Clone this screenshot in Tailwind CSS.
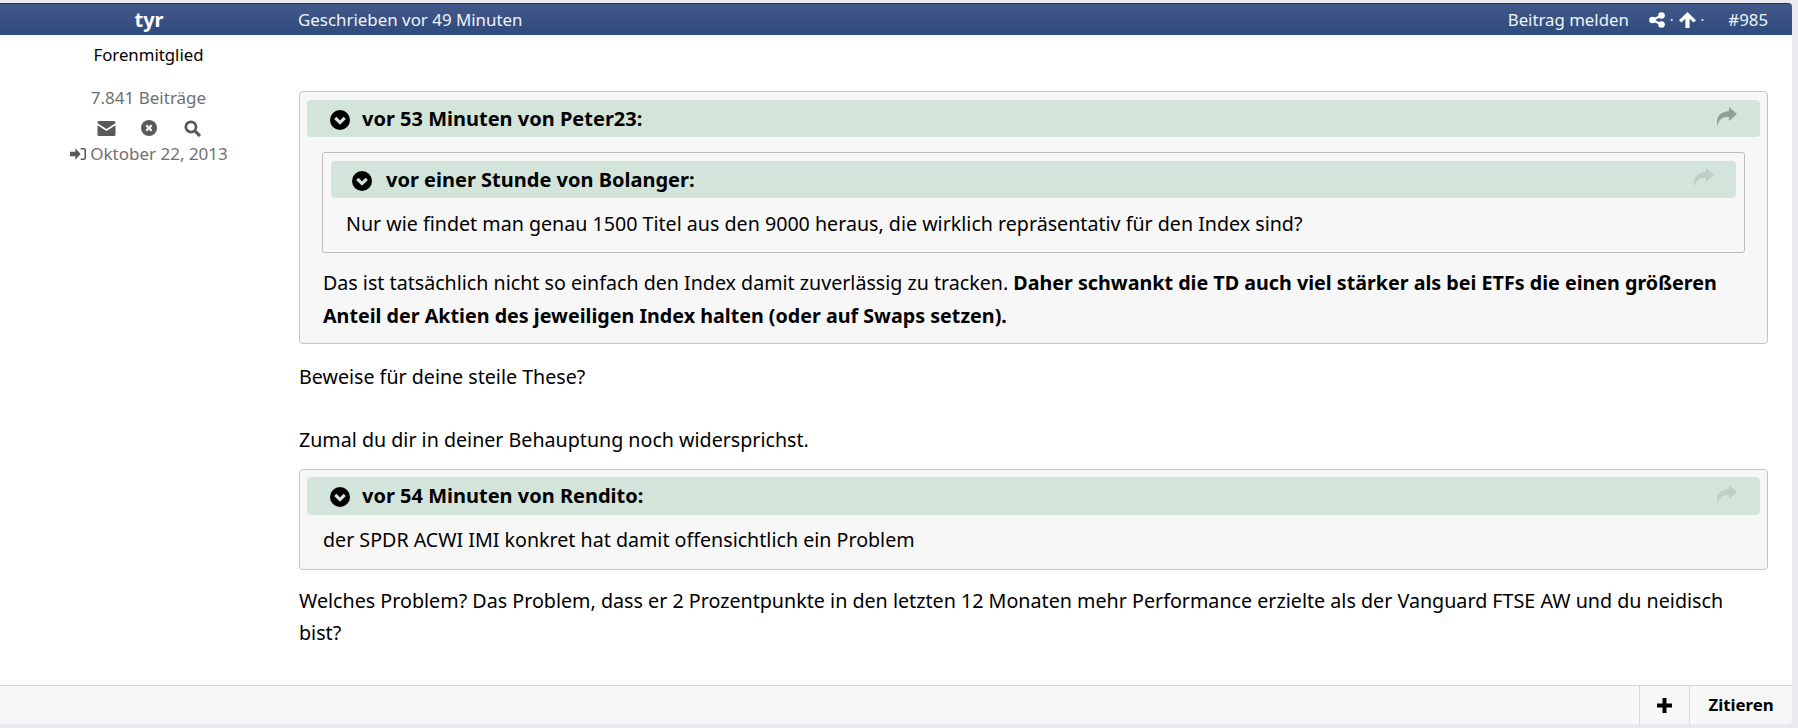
<!DOCTYPE html>
<html><head><meta charset="utf-8"><script src="https://cdn.jsdelivr.net/npm/@tailwindcss/browser@4"></script></head>
<body class="bg-[#e9e9ef] m-0 h-[728px] overflow-hidden font-['Noto_Sans','Open_Sans',sans-serif] text-black">
<div class="w-[1792px] pt-[3px]">
 <div class="h-[32px] rounded-tr-[4px] bg-gradient-to-b from-[#42598a] to-[#2f4a7c] border-t border-[#22365f] flex items-center text-white">
  <div class="w-[298px] text-center text-[20px] font-bold">tyr</div>
  <div class="text-[16.9px] text-[#eef2f8]">Geschrieben vor 49 Minuten</div>
  <div class="ml-auto flex items-center text-[16.8px] text-[#eef2f8] pr-[24px]">
   <span>Beitrag melden</span>
   <svg class="ml-[20px] w-[16px] h-[16px]" viewBox="0 0 16 16" fill="white"><circle cx="3.5" cy="8" r="3.3"/><circle cx="12.5" cy="3.5" r="3.3"/><circle cx="12.5" cy="12.5" r="3.3"/><path d="M3.5 8 12.5 3.5M3.5 8l9 4.500" stroke="white" stroke-width="2"/></svg>
   <span class="ml-[5px] text-[14px]">·</span>
   <svg class="ml-[5px] w-[17px] h-[16px]" viewBox="0 0 17 16" fill="white"><path d="M8.5 0 17 8.300l-2.400 2.300-4-3.900V16H6.400V6.700l-4 3.900L0 8.300z"/></svg>
   <span class="ml-[5px] text-[14px]">·</span>
   <span class="ml-[24px]">#985</span>
  </div>
 </div>
 <div class="flex bg-white h-[650px]">
  <div class="w-[297px] shrink-0 flex flex-col items-center">
   <div class="mt-[8px] text-[16.8px] leading-[24px]">Forenmitglied</div>
   <div class="mt-[19px] text-[17px] leading-[24px] text-[#6f6f6f]">7.841 Beiträge</div>
   <div class="mt-[7px] flex items-center h-[22px]">
    <svg class="w-[19px] h-[15px]" viewBox="0 0 18 15" fill="#5a5a5a"><path d="M1.500 0h15A1.500 1.500 0 0 1 18 1.500v.8L9 8 0 2.300v-.8A1.500 1.500 0 0 1 1.500 0z"/><path d="M0 4.300 9 10l9-5.700v9.200a1.500 1.500 0 0 1-1.500 1.500h-15A1.500 1.500 0 0 1 0 13.500z"/></svg>
    <svg class="ml-[25px] w-[16px] h-[16px]" viewBox="0 0 15 15"><circle cx="7.500" cy="7.500" r="7.500" fill="#5a5a5a"/><path d="M5 5l5 5M10 5l-5 5" stroke="white" stroke-width="2"/></svg>
    <svg class="ml-[27px] w-[17px] h-[17px]" viewBox="0 0 16 16" fill="none" stroke="#5a5a5a"><circle cx="6.500" cy="6.500" r="4.800" stroke-width="2.600"/><path d="M10.200 10.200 15 15" stroke-width="3"/></svg>
   </div>
   <div class="mt-[3px] ml-[1px] flex items-center text-[17px] leading-[24px] text-[#6f6f6f]">
    <svg class="mr-[4px] w-[16px] h-[14px]" viewBox="0 0 15 13" fill="#5a5a5a"><path d="M0 4.500h5V1l5 5.500L5 12V8.500H0z"/><path d="M10 .8h3a2 2 0 0 1 2 2v7.400a2 2 0 0 1-2 2h-3v-1.500h3a.5.5 0 0 0 .5-.5V2.800a.5.5 0 0 0-.5-.5h-3z"/></svg>
    <span>Oktober 22, 2013</span>
   </div>
  </div>
  <div class="ml-[2px] w-[1469px] text-[19.65px] leading-[33px]">
   <div class="mt-[56px] h-[253px] rounded-[4px] border border-[#c4c4c4] bg-[#f7f7f7] px-[7px] pt-[8px]">
    <div class="h-[37px] rounded-[4px] bg-[#d3e5db] flex items-center font-bold text-[20px] pl-[23px] pr-[23px]">
     <svg class="w-[20px] h-[20px] mr-[12px] mt-[2px]" viewBox="0 0 19 19"><circle cx="9.500" cy="9.500" r="9.500" fill="black"/><path d="M5 7.500l4.500 4.500L14 7.500" fill="none" stroke="#d3e5db" stroke-width="3"/></svg>
     <span>vor 53 Minuten von Peter23:</span>
     <svg class="ml-auto w-[21px] h-[19px] -mt-[4px]" viewBox="0 0 21 19" fill="#8fa096"><path d="M13 0l8 7-8 7v-4C7 10 3 11 1.500 19-.5 11 3 5 13 4z"/></svg>
    </div>
    <div class="mt-[15px] ml-[15px] mr-[15px] h-[101px] rounded-[3px] border border-[#bcbcbc] px-[8px] pt-[8px]">
     <div class="h-[37px] rounded-[4px] bg-[#d3e5db] flex items-center font-bold text-[20px] pl-[21px] pr-[22px]">
      <svg class="w-[20px] h-[20px] mr-[14px] mt-[2px]" viewBox="0 0 19 19"><circle cx="9.500" cy="9.500" r="9.500" fill="black"/><path d="M5 7.500l4.500 4.500L14 7.500" fill="none" stroke="#d3e5db" stroke-width="3"/></svg>
      <span>vor einer Stunde von Bolanger:</span>
      <svg class="ml-auto w-[21px] h-[19px] -mt-[4px]" viewBox="0 0 21 19" fill="#bccfc5"><path d="M13 0l8 7-8 7v-4C7 10 3 11 1.500 19-.5 11 3 5 13 4z"/></svg>
     </div>
     <p class="mt-[9px] pl-[15px]">Nur wie findet man genau 1500 Titel aus den 9000 heraus, die wirklich repräsentativ für den Index sind?</p>
    </div>
    <p class="mt-[13px] pl-[16px] pr-[10px]">Das ist tatsächlich nicht so einfach den Index damit zuverlässig zu tracken. <b class="text-[19.7px]">Daher schwankt die TD auch viel stärker als bei ETFs die einen größeren Anteil der Aktien des jeweiligen Index halten (oder auf Swaps setzen).</b></p>
   </div>
   <p class="mt-[16px]">Beweise für deine steile These?</p>
   <p class="mt-[30px]">Zumal du dir in deiner Behauptung noch widersprichst.</p>
   <div class="mt-[13px] h-[101px] rounded-[4px] border border-[#c4c4c4] bg-[#f7f7f7] px-[7px] pt-[7px]">
    <div class="h-[38px] rounded-[4px] bg-[#d3e5db] flex items-center font-bold text-[20px] pl-[23px] pr-[23px] pb-[2px]">
     <svg class="w-[20px] h-[20px] mr-[12px] mt-[4px]" viewBox="0 0 19 19"><circle cx="9.500" cy="9.500" r="9.500" fill="black"/><path d="M5 7.500l4.500 4.500L14 7.500" fill="none" stroke="#d3e5db" stroke-width="3"/></svg>
     <span>vor 54 Minuten von Rendito:</span>
     <svg class="ml-auto w-[21px] h-[19px] -mt-[2px]" viewBox="0 0 21 19" fill="#bccfc5"><path d="M13 0l8 7-8 7v-4C7 10 3 11 1.500 19-.5 11 3 5 13 4z"/></svg>
    </div>
    <p class="mt-[8px] pl-[16px]">der SPDR ACWI IMI konkret hat damit offensichtlich ein Problem</p>
   </div>
   <p class="mt-[15px] pr-[30px] text-[19.7px] leading-[32px]">Welches Problem? Das Problem, dass er 2 Prozentpunkte in den letzten 12 Monaten mehr Performance erzielte als der Vanguard FTSE AW und du neidisch bist?</p>
  </div>
 </div>
 <div class="h-[39px] bg-[#f7f7f7] border-t border-[#d8d8d8] flex justify-end rounded-br-[4px] font-bold text-[16.8px]">
  <div class="w-[50px] border-l border-[#d8d8d8] flex items-center justify-center"><svg class="w-[15px] h-[15px]" viewBox="0 0 15 15"><path d="M5.500 0h4v5.500H15v4H9.500V15h-4V9.500H0v-4h5.500z"/></svg></div>
  <div class="w-[103px] border-l border-[#d8d8d8] flex items-center justify-center">Zitieren</div>
 </div>
</div>
</body></html>
